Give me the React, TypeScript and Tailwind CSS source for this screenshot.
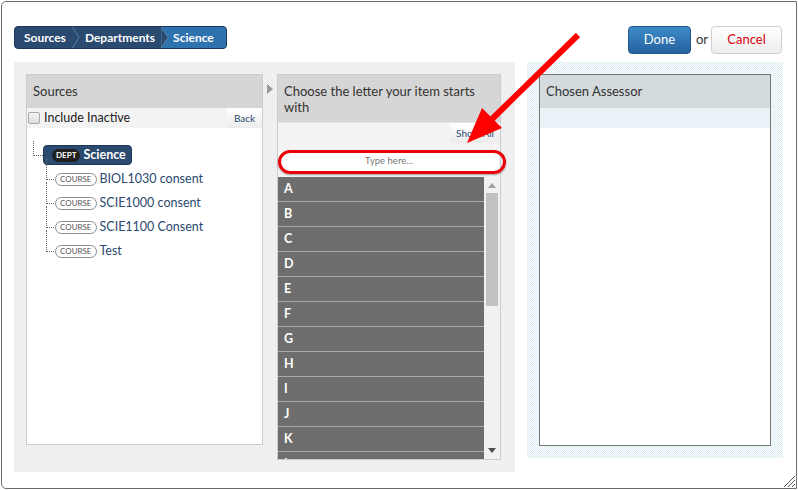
import React from "react"

const letters = ["A", "B", "C", "D", "E", "F", "G", "H", "I", "J", "K", "L"]
const courses = ["BIOL1030 consent", "SCIE1000 consent", "SCIE1100 Consent", "Test"]

function Chevron() {
  return (
    <svg width="8" height="21" viewBox="0 0 8 21" className="shrink-0">
      <polyline points="0.5,0 7,10.5 0.5,21" fill="none" stroke="#5d7ea6" strokeWidth="1" />
    </svg>
  )
}

export default function App() {
  return (
    <div className="relative w-[798px] h-[490px] bg-white font-['Lato','Open_Sans',sans-serif] overflow-hidden">
      <div className="ml-[1px] mt-[1px] w-[796px] h-[488px] border border-[#6f6f6f] rounded-l-[5px] bg-white pl-[12px] pr-[13px] pt-[24px]">
        {/* top bar */}
        <div className="flex h-[28px] items-start justify-between">
          <div className="flex h-[23px] rounded-[4px] border border-[#1c3757] bg-[#2b4a6f] overflow-hidden text-[12px] font-bold text-white">
            <span className="flex items-center pl-[9px] pr-[6px]">Sources</span>
            <Chevron />
            <span className="flex items-center pl-[5px] pr-[6px]">Departments</span>
            <div className="relative flex items-center bg-[#2f73ae] pl-[12px] pr-[12px]">
              <svg width="8" height="21" viewBox="0 0 8 21" className="absolute left-0 top-0">
                <polygon points="0,0 7,10.5 0,21" fill="#2b4a6f" stroke="#5d7ea6" strokeWidth="1" />
              </svg>
              Science
            </div>
          </div>
          <div className="flex items-center mr-[1px]">
            <button className="h-[28px] w-[63px] rounded-[4px] border border-[#24578a] bg-gradient-to-b from-[#3d8bc9] to-[#2662a0] text-[13px] text-white">
              Done
            </button>
            <span className="ml-[5px] mr-[3px] text-[13px] text-[#333]">or</span>
            <button className="h-[28px] w-[71px] rounded-[4px] border border-[#cfcfcf] bg-gradient-to-b from-white to-[#ededed] text-[13px] text-[#d8000c]">
              Cancel
            </button>
          </div>
        </div>

        {/* panels */}
        <div className="mt-[8px] flex items-start gap-[12px]">
          <div className="flex h-[410px] w-[501px] items-start p-[12px] bg-[image:repeating-conic-gradient(#e8e8e8_0_25%,#f7f7f7_0_50%)] bg-[length:2px_2px]">
            {/* Sources */}
            <div className="flex h-[371px] w-[237px] flex-col border border-[#cccccc] bg-white">
              <div className="flex h-[33px] items-center px-[6px] text-[13px] text-[#333] bg-[image:repeating-conic-gradient(#d1d1d1_0_25%,#dbdbdb_0_50%)] bg-[length:2px_2px]">
                Sources
              </div>
              <div className="flex h-[20px] items-center bg-[#f3f3f3]">
                <span className="ml-[1px] h-[12px] w-[12px] rounded-[2px] border border-[#a8a8a8] bg-gradient-to-b from-[#f4f4f4] to-[#dcdcdc]" />
                <span className="ml-[4px] text-[12.5px] text-[#222]">Include Inactive</span>
                <button className="ml-auto h-[20px] w-[35px] bg-gradient-to-b from-white to-[#ececec] text-[10px] text-[#2b4a6f]">
                  Back
                </button>
              </div>
              <div className="pl-[6px] pt-[13px]">
                <div className="flex items-end">
                  <span className="mb-[9px] h-[15px] w-[10px] border-l border-b border-dotted border-[#666]" />
                  <div className="flex h-[20px] items-center rounded-[4px] border border-[#1c3757] bg-[#2b4a6f] pl-[8px] pr-[5px]">
                    <span className="rounded-full bg-[#1f1f1f] px-[4px] text-[8px] font-bold leading-[13px] text-white">DEPT</span>
                    <span className="ml-[3px] text-[12.5px] font-bold text-white">Science</span>
                  </div>
                </div>
                <div className="ml-[13px] mt-[2px]">
                  {courses.map((c) => (
                    <div key={c} className="flex h-[24px] items-end">
                      <span className="mb-[11px] h-[22px] w-[8px] border-l border-b border-dotted border-[#666]" />
                      <div className="ml-[1px] flex h-[24px] items-center">
                        <span className="rounded-full border border-[#8a8a8a] px-[4px] text-[8px] leading-[11px] text-[#555]">COURSE</span>
                        <span className="ml-[3px] text-[12.5px] text-[#2b4a6f]">{c}</span>
                      </div>
                    </div>
                  ))}
                </div>
              </div>
            </div>

            {/* arrow between */}
            <div className="flex h-[371px] w-[14px] justify-center pt-[10px]">
              <svg width="6" height="10" viewBox="0 0 6 10">
                <polygon points="0,0 6,5 0,10" fill="#9a9a9a" />
              </svg>
            </div>

            {/* Letters */}
            <div className="flex h-[386px] w-[224px] flex-col border border-[#cccccc] bg-white">
              <div className="h-[47px] px-[6px] pt-[8px] text-[13px] leading-[16px] text-[#333] bg-[image:repeating-conic-gradient(#d1d1d1_0_25%,#dbdbdb_0_50%)] bg-[length:2px_2px]">
                Choose the letter your item starts with
              </div>
              <div className="h-[55px] border-t border-[#e2e2e2] bg-[image:repeating-conic-gradient(#eeeeee_0_25%,#f9f9f9_0_50%)] bg-[length:2px_2px]">
                <div className="flex h-[20px] justify-end">
                  <button className="h-[20px] w-[50px] bg-gradient-to-b from-white to-[#ebebeb] text-[10px] text-[#2b4a6f]">
                    Show All
                  </button>
                </div>
                <div className="mx-[1px] mt-[9px] flex h-[19px] items-center justify-center bg-white text-[9.5px] text-[#777]">
                  Type here...
                </div>
              </div>
              <div className="flex flex-1 overflow-hidden">
                <div className="flex-1 bg-[image:repeating-conic-gradient(#696969_0_25%,#727272_0_50%)] bg-[length:2px_2px]">
                  {letters.map((l) => (
                    <div key={l} className="flex h-[25px] items-center border-b border-[#a8a8a8] pl-[6px] text-[12.5px] font-bold text-white">
                      {l}
                    </div>
                  ))}
                </div>
                <div className="relative w-[16px] bg-[#f1f1f1]">
                  <svg width="8" height="5" viewBox="0 0 8 5" className="absolute left-[4px] top-[6px]">
                    <polygon points="0,5 4,0 8,5" fill="#a3a3a3" />
                  </svg>
                  <div className="absolute left-[2px] top-[16px] h-[113px] w-[12px] bg-[#c1c1c1]" />
                  <svg width="8" height="5" viewBox="0 0 8 5" className="absolute left-[4px] bottom-[6px]">
                    <polygon points="0,0 8,0 4,5" fill="#505050" />
                  </svg>
                </div>
              </div>
            </div>
          </div>

          {/* Chosen Assessor */}
          <div className="h-[396px] w-[256px] p-[12px] bg-[image:repeating-conic-gradient(#deedf4_0_25%,#fafdfe_0_50%)] bg-[length:2px_2px]">
            <div className="flex h-[372px] flex-col border border-[#777] bg-white">
              <div className="flex h-[33px] items-center px-[6px] text-[13px] text-[#333] bg-[image:repeating-conic-gradient(#cfd7da_0_25%,#d9dfe1_0_50%)] bg-[length:2px_2px]">
                Chosen Assessor
              </div>
              <div className="h-[20px] bg-[image:repeating-conic-gradient(#deedf3_0_25%,#f4f9fb_0_50%)] bg-[length:2px_2px]" />
            </div>
          </div>
        </div>
      </div>

      {/* annotation: red oval */}
      <div className="pointer-events-none absolute left-[278px] top-[150px] h-[24px] w-[228px] rounded-full border-[3px] border-[#e8000b] shadow-[0_1px_2px_rgba(0,0,0,0.35)]" />

      {/* annotation: red arrow */}
      <svg className="pointer-events-none absolute left-0 top-0" width="798" height="490" viewBox="0 0 798 490">
        <line x1="578" y1="35" x2="490" y2="121" stroke="#ff0000" strokeWidth="6" />
        <polygon points="467,143 482,108 502,128" fill="#ff0000" />
      </svg>

      {/* resize grip */}
      <svg className="absolute left-[783px] top-[475px]" width="13" height="13" viewBox="0 0 13 13">
        <line x1="1" y1="12" x2="12" y2="1" stroke="#555" strokeWidth="1" />
        <line x1="5" y1="12" x2="12" y2="5" stroke="#555" strokeWidth="1" />
        <line x1="9" y1="12" x2="12" y2="9" stroke="#555" strokeWidth="1" />
      </svg>
    </div>
  )
}
